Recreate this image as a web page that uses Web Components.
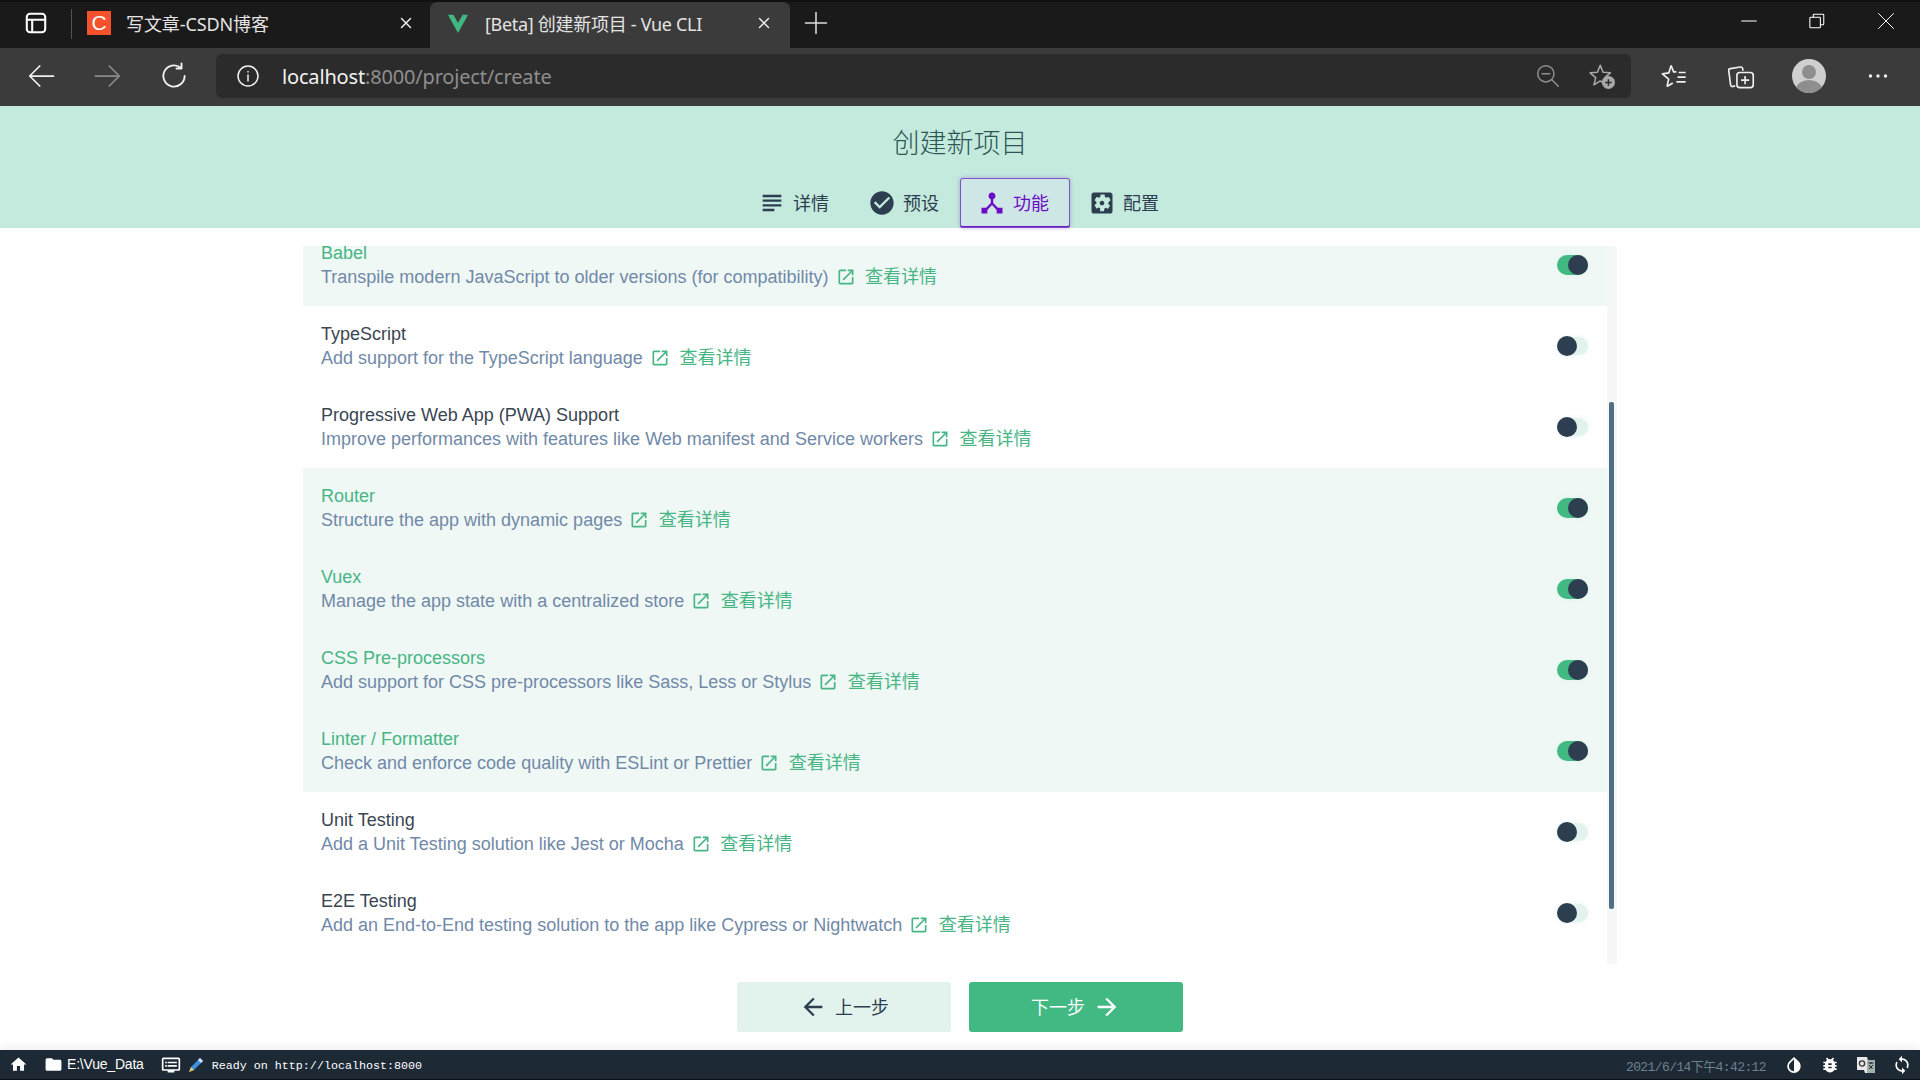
<!DOCTYPE html>
<html lang="zh">
<head>
<meta charset="utf-8">
<title>[Beta] 创建新项目 - Vue CLI</title>
<style>
  html, body { margin: 0; height: 100%; }
  body { width: 1920px; height: 1080px; overflow: hidden; font-family: "Liberation Sans", "Noto Sans CJK SC", sans-serif; background: #fff; display: flex; flex-direction: column; }
</style>
</head>
<body>
<browser-tabs></browser-tabs>
<browser-toolbar></browser-toolbar>
<project-header></project-header>
<project-body>
  <feature-row class="first" on title="Babel" desc="Transpile modern JavaScript to older versions (for compatibility)"></feature-row>
  <feature-row title="TypeScript" desc="Add support for the TypeScript language"></feature-row>
  <feature-row title="Progressive Web App (PWA) Support" desc="Improve performances with features like Web manifest and Service workers"></feature-row>
  <feature-row on title="Router" desc="Structure the app with dynamic pages"></feature-row>
  <feature-row on title="Vuex" desc="Manage the app state with a centralized store"></feature-row>
  <feature-row on title="CSS Pre-processors" desc="Add support for CSS pre-processors like Sass, Less or Stylus"></feature-row>
  <feature-row on title="Linter / Formatter" desc="Check and enforce code quality with ESLint or Prettier"></feature-row>
  <feature-row title="Unit Testing" desc="Add a Unit Testing solution like Jest or Mocha"></feature-row>
  <feature-row title="E2E Testing" desc="Add an End-to-End testing solution to the app like Cypress or Nightwatch"></feature-row>
</project-body>
<status-bar></status-bar>

<script>
const P = {
  subject:'M14 17H4v2h10v-2zm6-8H4v2h16V9zM4 15h16v-2H4v2zM4 5v2h16V5H4z',
  check:'M12 2C6.48 2 2 6.48 2 12s4.48 10 10 10 10-4.48 10-10S17.52 2 12 2zm-2 15l-5-5 1.41-1.41L10 14.17l7.59-7.59L19 8l-9 9z',
  hub:'M17 16l-4-4V8.82C14.16 8.4 15 7.3 15 6c0-1.66-1.34-3-3-3S9 4.34 9 6c0 1.3.84 2.4 2 2.82V12l-4 4H3v5h5v-3.05l4-4.2 4 4.2V21h5v-5h-4z',
  settings:'M12 10c-1.1 0-2 .9-2 2s.9 2 2 2 2-.9 2-2-.9-2-2-2zm7-7H5c-1.11 0-2 .9-2 2v14c0 1.1.89 2 2 2h14c1.11 0 2-.9 2-2V5c0-1.1-.89-2-2-2zm-1.75 9c0 .23-.02.46-.05.68l1.48 1.16c.13.11.17.3.08.45l-1.4 2.42c-.09.15-.27.21-.43.15l-1.74-.7c-.36.28-.76.51-1.18.69l-.26 1.85c-.03.17-.18.3-.35.3h-2.8c-.17 0-.32-.13-.35-.3L10.5 16.6c-.43-.18-.82-.41-1.18-.69l-1.74.7c-.16.06-.34 0-.43-.15l-1.4-2.42c-.09-.15-.05-.34.08-.45l1.48-1.16c-.03-.22-.05-.45-.05-.68 0-.23.02-.46.05-.68l-1.48-1.16c-.13-.11-.17-.3-.08-.45l1.4-2.42c.09-.15.27-.21.43-.15l1.74.7c.36-.28.76-.51 1.18-.69l.26-1.85c.03-.17.18-.3.35-.3h2.8c.17 0 .32.13.35.3l.26 1.85c.43.18.82.41 1.18.69l1.74-.7c.16-.06.34 0 .43.15l1.4 2.42c.09.15.05.34-.08.45l-1.48 1.16c.03.22.05.45.05.68z',
  open:'M19 19H5V5h7V3H5c-1.11 0-2 .9-2 2v14c0 1.1.89 2 2 2h14c1.1 0 2-.9 2-2v-7h-2v7zM14 3v2h3.59l-9.83 9.83 1.41 1.41L19 6.41V10h2V3h-7z',
  back:'M20 11H7.83l5.59-5.59L12 4l-8 8 8 8 1.41-1.41L7.83 13H20v-2z',
  forward:'M12 4l-1.41 1.41L16.17 11H4v2h12.17l-5.58 5.59L12 20l8-8z',
  home:'M10 20v-6h4v6h5v-8h3L12 3 2 12h3v8z',
  folder:'M10 4H4c-1.1 0-1.99.9-1.99 2L2 18c0 1.1.9 2 2 2h16c1.1 0 2-.9 2-2V8c0-1.1-.9-2-2-2h-8l-2-2z',
  dvr:'M21 3H3c-1.1 0-2 .9-2 2v12c0 1.1.9 2 2 2h5v2h8v-2h5c1.1 0 1.99-.9 1.99-2L23 5c0-1.1-.9-2-2-2zm0 14H3V5h18v12zm-2-9H8v2h11V8zm0 4H8v2h11v-2zM7 8H5v2h2V8zm0 4H5v2h2v-2z',
  invert:'M17.66 7.93L12 2.27 6.34 7.93c-3.12 3.12-3.12 8.19 0 11.31C7.9 20.8 9.95 21.58 12 21.58c2.05 0 4.1-.78 5.66-2.34 3.12-3.12 3.12-8.19 0-11.31zM12 19.59c-1.6 0-3.11-.62-4.24-1.76C6.62 16.69 6 15.19 6 13.59s.62-3.11 1.76-4.24L12 5.1v14.49z',
  bug:'M20 8h-2.81c-.45-.78-1.07-1.45-1.82-1.96L17 4.41 15.59 3l-2.17 2.17C12.96 5.06 12.49 5 12 5c-.49 0-.96.06-1.41.17L8.41 3 7 4.41l1.62 1.63C7.88 6.55 7.26 7.22 6.81 8H4v2h2.09c-.05.33-.09.66-.09 1v1H4v2h2v1c0 .34.04.67.09 1H4v2h2.81c1.04 1.79 2.97 3 5.19 3s4.15-1.21 5.19-3H20v-2h-2.09c.05-.33.09-.66.09-1v-1h2v-2h-2v-1c0-.34-.04-.67-.09-1H20V8zm-6 8h-4v-2h4v2zm0-4h-4v-2h4v2z',
  sync:'M12 4V1L8 5l4 4V6c3.31 0 6 2.69 6 6 0 1.01-.25 1.97-.7 2.8l1.46 1.46C19.54 15.03 20 13.57 20 12c0-4.42-3.58-8-8-8zm0 14c-3.31 0-6-2.69-6-6 0-1.01.25-1.97.7-2.8L5.24 7.74C4.46 8.97 4 10.43 4 12c0 4.42 3.58 8 8 8v3l4-4-4-4v3z'
};
const mi = (n, s, c='currentColor', st='') => `<svg width="${s}" height="${s}" viewBox="0 0 24 24" fill="${c}" style="display:block;flex:none;${st}"><path d="${P[n]}"/></svg>`;
const line = (s, inner, sw=1.5, c='currentColor') => `<svg width="${s}" height="${s}" viewBox="0 0 24 24" fill="none" stroke="${c}" stroke-width="${sw}" stroke-linecap="round" stroke-linejoin="round" style="display:block;flex:none">${inner}</svg>`;
const star = 'M10.5 2.8l2.4 6 6.3.5-4.8 4.1 1.5 6.2-5.4-3.4-5.4 3.4 1.5-6.2L1.8 9.3l6.3-.5z';

function def(name, render) {
  customElements.define(name, class extends HTMLElement {
    connectedCallback() {
      if (this.shadowRoot) return;
      this.attachShadow({mode:'open'}).innerHTML = render(this);
    }
  });
}

def('browser-tabs', () => `<style>
  :host { display:flex; height:48px; flex:none; background:#1a1a1a; box-shadow: inset 0 2px 0 #101010; color:#e4e4e4; font:18px "Noto Sans","Noto Sans CJK SC",sans-serif; box-sizing:border-box; }
  .side { width:71px; display:flex; align-items:center; justify-content:center; }
  .div { width:1px; height:30px; background:#555; margin-top:9px; }
  .tab { box-sizing:border-box; display:flex; align-items:center; height:46px; margin-top:2px; width:358px; padding:0 0 4px 15px; white-space:nowrap; }
  .tab.active { background:#3b3b3b; border-radius:7px 7px 0 0; width:360px; padding-left:17px; }
  .fav { width:24px; height:24px; background:#f4512c; color:#fff; font:21px/24px "Liberation Sans",sans-serif; text-align:center; flex:none; }
  .t { margin-left:15px; padding-bottom:1px; letter-spacing:-.1px; }
  .active .t { margin-left:16px; letter-spacing:-.3px; }
  .x { margin-left:auto; margin-right:15px; }
  .active .x { margin-right:17px; }
  .plus { width:52px; display:flex; align-items:center; justify-content:center; padding-bottom:2px; }
  .win { margin-left:auto; display:flex; }
  .win div { width:68.5px; display:flex; align-items:center; justify-content:center; padding-bottom:6px; }
</style>
<div class="side" style="padding-bottom:2px">${line(26,'<rect x="3.5" y="3.5" width="17" height="17" rx="3"/><path d="M3.5 9h17M8.5 9v11"/>',1.9,'#fff')}</div>
<div class="div"></div>
<div class="tab"><div class="fav">C</div><span class="t">写文章-CSDN博客</span><span class="x">${line(18,'<path d="M6 6l12 12M18 6L6 18"/>',1.9,'#eee')}</span></div>
<div class="tab active"><svg width="22" height="22" viewBox="0 0 24 24" style="flex:none"><path d="M1 3h6l5 9 5-9h6L12 23z" fill="#41b883"/></svg><span class="t">[Beta] 创建新项目 - Vue CLI</span><span class="x">${line(18,'<path d="M6 6l12 12M18 6L6 18"/>',1.9,'#eee')}</span></div>
<div class="plus">${line(28,'<path d="M12 3v18M3 12h18"/>',1.3,'#ddd')}</div>
<div class="win">
  <div>${line(16,'<path d="M1 12h22"/>',1.6,'#fff')}</div>
  <div>${line(18,'<rect x="2.5" y="7" width="14" height="14" rx="1"/><path d="M7 7V4a1 1 0 0 1 1-1h12a1 1 0 0 1 1 1v12a1 1 0 0 1-1 1h-3.5"/>',1.4,'#fff')}</div>
  <div>${line(18,'<path d="M2 2l20 20M22 2L2 22"/>',1.3,'#fff')}</div>
</div>`);

def('browser-toolbar', () => `<style>
  :host { display:flex; flex:none; height:58px; background:#3b3b3b; box-sizing:border-box; padding:6px 6px 8px 8px; font:20px "Noto Sans",sans-serif; }
  .b { width:66px; display:flex; align-items:center; justify-content:center; flex:none; }
  .addr { flex:1; margin-left:10px; margin-right:9px; background:#2b2b2b; border-radius:6px; display:flex; align-items:center; padding:0 15px 0 20px; }
  .url { margin-left:22px; color:#8f8f8f; letter-spacing:-.17px; white-space:nowrap; }
  .url b { font-weight:400; color:#f2f2f2; }
  .r { margin-left:auto; display:flex; gap:27px; align-items:center; }
  .avatar { width:34px; height:34px; border-radius:50%; background:#cfcfcf; overflow:hidden; margin-left:2px; }
  .more { width:72px; }
</style>
<div class="b">${line(30,'<path d="M22 12H3M11 4l-8 8 8 8"/>',1.4,'#f0f0f0')}</div>
<div class="b" style="padding-left:2px;box-sizing:border-box">${line(30,'<path d="M2 12h19M13 4l8 8-8 8"/>',1.4,'#8a8a8a')}</div>
<div class="b" style="padding-left:2px;box-sizing:border-box">${line(30,'<path d="M20.5 12a8.5 8.5 0 1 1-3-6.5M18 2v4h-4"/>',1.5,'#f0f0f0')}</div>
<div class="addr">
  ${line(24,'<circle cx="12" cy="12" r="10"/><path d="M12 11v6M12 7.5v.5"/>',1.5,'#f0f0f0')}
  <span class="url"><b>localhost</b>:8000/project/create</span>
  <div class="r">
    ${line(26,'<circle cx="10" cy="10" r="7.5"/><path d="M6.5 10h7M15.5 15.5l6 6"/>',1.4,'#909090')}
    <svg width="28" height="28" viewBox="0 0 24 24" style="display:block"><path d="${star}" fill="none" stroke="#a8a8a8" stroke-width="1.3" stroke-linejoin="round"/><circle cx="17.500" cy="17.500" r="5.600" fill="#a8a8a8"/><path d="M17.500 14.700v5.600M14.700 17.500h5.600" stroke="#2b2b2b" stroke-width="1.300"/></svg>
  </div>
</div>
<div class="b" style="width:67px"><svg width="28" height="28" viewBox="0 0 24 24" fill="none" stroke="#f0f0f0" stroke-width="1.4" stroke-linejoin="round"><path d="M9.5 3l2.2 5.5H14M6 21l1.400-6.300L2 10.200l5.600-.9L9.500 3M6 21l5-3"/><path d="M16 9h6M15 13h7M14 17h8"/></svg></div>
<div class="b" style="width:67px"><svg width="28" height="28" viewBox="0 0 24 24" fill="none" stroke="#f0f0f0" stroke-width="1.4"><path d="M7 20.500 5 21c-1 .2-1.700-.3-1.900-1.200L1.500 7.500c-.1-1 .3-1.700 1.300-1.800l8.700-1.400c1-.1 1.700.3 1.900 1.200l.3 2"/><rect x="8.500" y="9" width="14" height="13" rx="2.500" fill="#3b3b3b"/><path d="M15.500 12v7M12 15.500h7"/></svg></div>
<div class="b" style="width:68px"><div class="avatar"><svg width="34" height="34" viewBox="0 0 34 34" style="display:block"><circle cx="17" cy="13" r="7" fill="#8e8e8e"/><ellipse cx="17" cy="30" rx="13" ry="9" fill="#8e8e8e"/></svg></div></div>
<div class="b more">${line(24,'<circle cx="4.500" cy="12" r="1.100" fill="#f0f0f0"/><circle cx="12" cy="12" r="1.100" fill="#f0f0f0"/><circle cx="19.500" cy="12" r="1.100" fill="#f0f0f0"/>',1.2,'#f0f0f0')}</div>`);

def('nav-tab', el => `<style>
  :host { display:flex; box-sizing:border-box; width:110px; height:50px; align-items:center; padding-left:20px; gap:9px; font-size:18px; color:#2c3e50; border-radius:3px; }
  :host([active]) { color:#6a0dc4; background:#cfe6e6; box-shadow:inset 0 0 0 1px #7d55c0, inset 0 -2px 0 #6a12c4, 0 0 4px rgba(106,18,196,.35); }
  span { padding-bottom:3px; }
</style>${mi(el.getAttribute('icon'),28,'currentColor','margin:0 -2px')}<span><slot></slot></span>`);

def('project-header', () => `<style>
  :host { display:block; flex:none; height:122px; background:#c4eadd; box-sizing:border-box; }
  h1 { margin:0; height:72px; padding-bottom:2px; box-sizing:border-box; display:flex; align-items:center; justify-content:center; font-size:27px; font-weight:300; color:#2c5555; }
  nav { display:flex; justify-content:center; }
</style>
<h1>创建新项目</h1>
<nav>
  <nav-tab icon="subject">详情</nav-tab>
  <nav-tab icon="check">预设</nav-tab>
  <nav-tab icon="hub" active>功能</nav-tab>
  <nav-tab icon="settings">配置</nav-tab>
</nav>`);

def('x-toggle', () => `<style>
  :host { display:block; position:relative; width:31px; height:20px; flex:none; }
  .track { width:31px; height:18px; margin-top:1px; border-radius:9px; background:#e2f3ee; box-shadow:0 0 6px rgba(226,243,238,.7); }
  .knob { position:absolute; top:0; left:0; width:20px; height:20px; border-radius:50%; background:#2c3e50; }
  :host([on]) .track { background:#42b983; height:20px; margin-top:0; border-radius:10px; }
  :host([on]) .knob { left:11px; }
</style><div class="track"></div><div class="knob"></div>`);

def('feature-row', el => {
  const on = el.hasAttribute('on');
  return `<style>
  :host { display:flex; box-sizing:border-box; height:81px; flex:none; align-items:center; padding:0 18px 2px; font-size:18px; line-height:24px; background:${on?'#eff8f5':'#fff'}; }
  :host(.first) { margin-top:-21px; }
  .text { flex:1; min-width:0; }
  .title { color:${on?'#48b585':'#3a4652'}; }
  .desc { color:#7189a8; display:flex; align-items:center; white-space:nowrap; }
  a { color:#48b585; display:flex; align-items:center; text-decoration:none; margin-left:7px; gap:9.500px; }
</style>
<div class="text"><div class="title">${el.getAttribute('title')}</div>
<div class="desc">${el.getAttribute('desc')}<a>${mi('open',20)}<span>查看详情</span></a></div></div>
<x-toggle ${on?'on':''} style="margin-right:1px"></x-toggle>`;
});

def('x-btn', el => `<style>
  :host { display:flex; box-sizing:border-box; width:214px; height:50px; align-items:center; justify-content:center; gap:8px; font-size:18px; border-radius:3px; background:#e2f3ee; color:#2c3e50; }
  :host([primary]) { background:#42b983; color:#fff; }
</style><slot></slot>`);

def('project-body', () => `<style>
  :host { display:flex; flex-direction:column; flex:1; min-height:0; padding-top:18px; }
  .panel { display:flex; height:718px; width:1314px; margin-left:303px; flex:none; overflow:hidden; }
  .list { flex:1; min-width:0; display:flex; flex-direction:column; overflow:hidden; }
  .track { width:10px; flex:none; background:#f6f7f7; display:flex; justify-content:center; }
  .thumb { width:5px; height:507px; margin-top:156px; background:#4f6f85; border-radius:2px; margin-left:-1px; }
  .actions { display:flex; justify-content:flex-start; gap:18px; margin:18px 0 0 737px; }
  x-btn span { padding-bottom:2px; }
</style>
<div class="panel"><div class="list"><slot></slot></div><div class="track"><div class="thumb"></div></div></div>
<div class="actions">
  <x-btn>${mi('back',28)}<span>上一步</span></x-btn>
  <x-btn primary><span>下一步</span>${mi('forward',28)}</x-btn>
</div>`);

def('status-bar', () => `<style>
  :host { display:flex; flex:none; box-sizing:border-box; height:30px; background:#1d2935; border-bottom:1px solid #0a0f14; color:#fff; align-items:center; font-size:14px; box-shadow:0 -2px 10px rgba(0,0,0,.08); position:relative; padding-left:9px; }
  .p { letter-spacing:-.2px; margin-left:4px; padding-bottom:1px; }
  .m { font:11.7px "Liberation Mono",monospace; margin-left:7px; white-space:nowrap; padding-top:2px; }
  .date { margin-left:auto; font:13px "Liberation Mono","Noto Sans CJK SC",monospace; letter-spacing:-.6px; color:#6d8091; white-space:nowrap; padding-top:1px; }
  .i { width:36px; display:flex; justify-content:center; flex:none; }
</style>
${mi('home',19)}
<span style="width:16px"></span>${mi('folder',19)}
<span class="p">E:\\Vue_Data</span>
<span style="width:17px"></span>${mi('dvr',20)}
<span style="width:6px"></span>
<svg width="18" height="18" viewBox="0 0 18 18" style="flex:none"><path d="M2 16l2-5L13 2l3 3-9 9z" fill="#3f8fe0"/><path d="M2 16l2-5 3 3z" fill="#e8c85a"/><path d="M13 2l3 3-2 2-3-3z" fill="#cfe6ff"/></svg>
<span class="m">Ready on http://localhost:8000</span>
<span class="date">2021/6/14下午4:42:12</span>
<span class="i" style="margin-left:10px">${mi('invert',20)}</span>
<span class="i">${mi('bug',20)}</span>
<span class="i"><svg width="20" height="20" viewBox="0 0 20 20"><path d="M1 2h10l1 3h7v13H9l-1-3H1z" fill="#e8e8e8"/><rect x="11" y="5" width="8" height="13" fill="#9fb0ad"/><circle cx="6" cy="8.500" r="2.600" fill="none" stroke="#333" stroke-width="1.300"/><path d="M12.500 8h5M15 7v2M13 10l3.500 4M17 10l-4 4" stroke="#222" stroke-width="1"/></svg></span>
<span class="i">${mi('sync',20)}</span>`);
</script>
</body>
</html>
